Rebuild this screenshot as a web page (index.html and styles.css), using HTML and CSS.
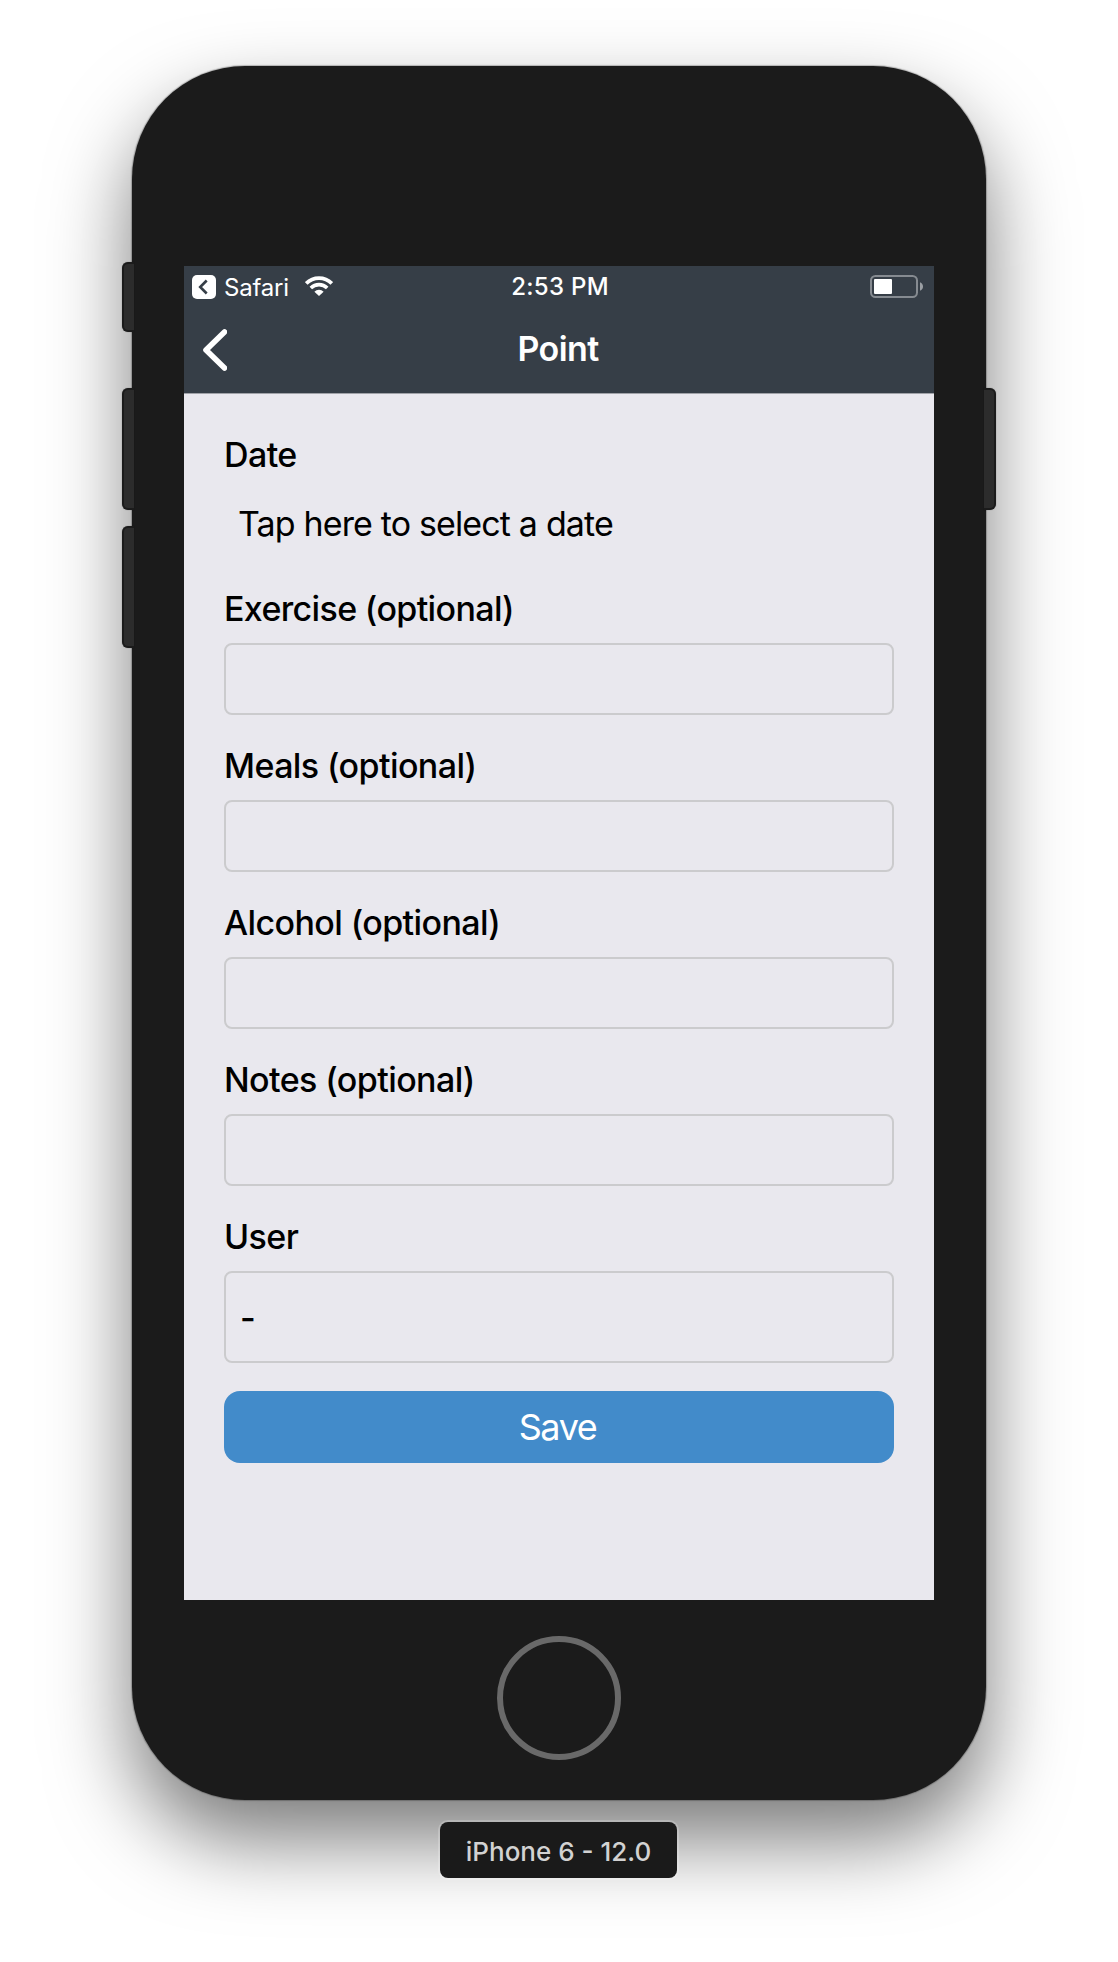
FILE: index.html
```html
<!DOCTYPE html>
<html lang="en">
<head>
<meta charset="utf-8">
<title>Point</title>
<link rel="stylesheet" href="styles.css">
</head>
<body>
<div class="phone">
  <span class="key key-mute"></span>
  <span class="key key-up"></span>
  <span class="key key-down"></span>
  <span class="key key-power"></span>
  <main class="screen">
    <header class="header">
      <div class="status">
        <div class="status-left">
          <svg class="return" viewBox="0 0 24 24"><rect width="24" height="24" rx="5" fill="#fff"/><path d="M14.7 5.5 8.2 12l6.5 6.5" fill="none" stroke="#363e47" stroke-width="2.6"/></svg>
          <span class="app">Safari</span>
          <svg class="wifi" viewBox="0 0 28 20"><g fill="none" stroke="#fff"><path d="M1.2 7.4a18.2 18.2 0 0 1 25.6 0" stroke-width="3.8"/><path d="M5.8 12a11.7 11.7 0 0 1 16.4 0" stroke-width="3.6"/></g><path d="M14 20 9.400 15.700a6.600 6.600 0 0 1 9.200 0Z" fill="#fff"/></svg>
        </div>
        <span class="time">2:53 PM</span>
        <svg class="battery" viewBox="0 0 53 23"><rect x="1" y="1" width="46" height="21" rx="4.5" fill="none" stroke="#868b91" stroke-width="2"/><rect x="4" y="4" width="18" height="15" rx="1" fill="#fff"/><path d="M50 7.2q3 1.3 3 4.3t-3 4.3Z" fill="#9b9fa4"/></svg>
      </div>
      <div class="nav">
        <svg class="back" viewBox="0 0 24 42"><path d="M21.5 3 3 21l18.500 18" fill="none" stroke="#fff" stroke-width="5.600" stroke-linecap="round" stroke-linejoin="round"/></svg>
        <h1 class="title">Point</h1>
      </div>
    </header>
    <form class="form">
      <div class="field date"><span class="label">Date</span><span class="picker">Tap here to select a date</span></div>
      <div class="field"><span class="label exercise">Exercise (optional)</span><div class="box"></div></div>
      <div class="field"><span class="label">Meals (optional)</span><div class="box"></div></div>
      <div class="field"><span class="label">Alcohol (optional)</span><div class="box"></div></div>
      <div class="field"><span class="label">Notes (optional)</span><div class="box"></div></div>
      <div class="field"><span class="label">User</span><div class="box select">-</div></div>
      <button class="save" type="button">Save</button>
    </form>
  </main>
  <div class="home"></div>
</div>
<div class="device">iPhone 6 - 12.0</div>
</body>
</html>
```
FILE: styles.css
```css
* { box-sizing: border-box; }
body {
  margin: 0;
  height: 1962px;
  padding-top: 66px;
  display: flex;
  flex-direction: column;
  align-items: center;
  background: #fff;
  font-family: Inter, "Liberation Sans", sans-serif;
  overflow: hidden;
}
.phone {
  position: relative;
  width: 854px;
  height: 1734px;
  flex: none;
  padding-top: 200px;
  display: flex;
  flex-direction: column;
  align-items: center;
  border-radius: 113px;
  background: #1b1b1b;
  box-shadow: 0 0 1px 1px rgba(0,0,0,.24), 0 40px 82px rgba(0,0,0,.52);
}
.key {
  position: absolute;
  left: -10px;
  width: 12px;
  height: 122px;
  background: #2c2c2c;
  border: 2px solid #1b1b1b;
  border-right: 0;
  border-radius: 6px 0 0 6px;
  box-shadow: 0 0 1px rgba(0,0,0,.5);
}
.key-mute { top: 196px; height: 70px; }
.key-up { top: 322px; }
.key-down { top: 460px; }
.key-power {
  top: 322px;
  left: auto;
  right: -10px;
  border: 2px solid #1b1b1b;
  border-left: 0;
  border-radius: 0 6px 6px 0;
}
.screen {
  width: 750px;
  height: 1334px;
  flex: none;
  background: #e9e8ee;
}
.header {
  height: 128px;
  background: #363e47;
  border-bottom: 1px solid #a0a2a8;
  color: #fff;
}
.status {
  height: 40px;
  padding: 0 11px 0 8px;
  display: grid;
  grid-template-columns: 1fr auto 1fr;
  align-items: center;
}
.status-left { display: flex; align-items: center; height: 40px; padding-top: 2px; }
.return { width: 24px; height: 24px; }
.app { margin-left: 8px; width: 73px; font-size: 24px; letter-spacing: -.2px; }
.wifi { width: 28px; height: 20px; margin-left: 8px; margin-bottom: 2px; }
.time { font-size: 24px; font-weight: 500; letter-spacing: .3px; padding: 1px 0 0 5px; }
.battery { width: 53px; height: 23px; justify-self: end; }
.nav {
  height: 87px;
  display: grid;
  grid-template-columns: 1fr auto 1fr;
  align-items: center;
  padding: 0 19px;
}
.back { width: 24px; height: 42px; }
.title {
  margin: 0;
  padding: 0 2px 1px 0;
  font-size: 34px;
  font-weight: 600;
  line-height: 40px;
  letter-spacing: -.6px;
}
.form { padding: 40px; display: flex; flex-direction: column; }
.field { display: flex; flex-direction: column; margin-bottom: 28px; }
.label {
  height: 57px;
  padding: 2px 0 0 0;
  line-height: 42px;
  font-size: 34px;
  font-weight: 500;
  letter-spacing: -.6px;
  color: #000;
  white-space: nowrap;
}
.exercise { letter-spacing: -.65px; }
.date { margin-bottom: 18px; }
.date .label { height: 50px; padding-top: 0; }
.picker {
  height: 84px;
  padding: 19px 0 0 14px;
  font-size: 34px;
  line-height: 42px;
  letter-spacing: -.9px;
  word-spacing: .2px;
  color: #000;
}
.box { height: 72px; border: 2px solid #cbcbcd; border-radius: 8px; }
.select { height: 92px; line-height: 90px; padding-left: 14px; font-size: 34px; font-weight: 500; }
.save {
  height: 72px;
  border: 0;
  padding: 0 3px 0 0;
  border-radius: 16px;
  background: #428bca;
  color: #fff;
  font: 36px/72px Inter, "Liberation Sans", sans-serif;
  letter-spacing: -1.4px;
}
.home {
  width: 124px;
  height: 124px;
  flex: none;
  margin-top: 36px;
  border: 6px solid #696969;
  border-radius: 50%;
}
.device {
  position: relative;
  width: 237px;
  height: 56px;
  flex: none;
  margin: 22px 1px 0 0;
  border-radius: 8px;
  background: #1a1a1a;
  box-shadow: 0 0 0 2px rgba(255,255,255,.2);
  color: #d2d2d2;
  font-size: 26px;
  font-weight: 500;
  line-height: 60px;
  text-align: center;
}
```
